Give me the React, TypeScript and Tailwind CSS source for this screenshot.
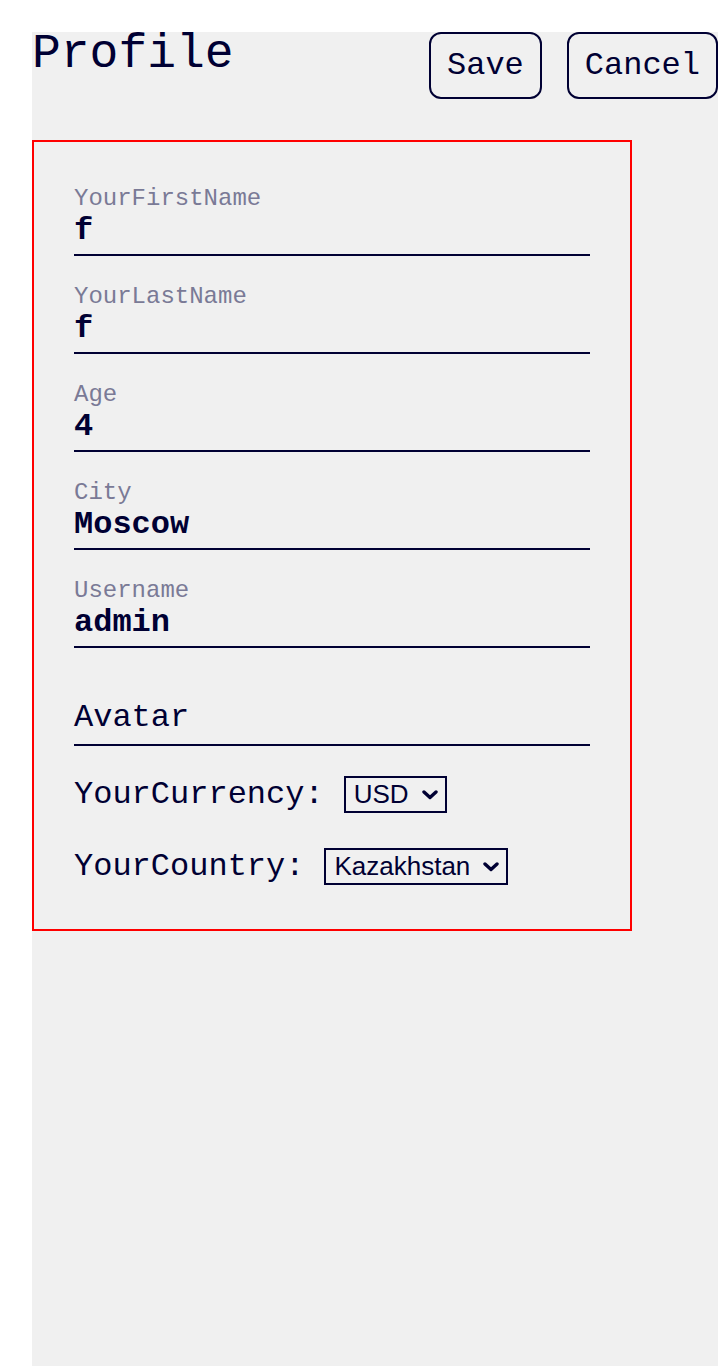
import { useState } from 'react';

const fields = [
  { label: 'YourFirstName', value: 'f' },
  { label: 'YourLastName', value: 'f' },
  { label: 'Age', value: '4' },
  { label: 'City', value: 'Moscow' },
  { label: 'Username', value: 'admin' },
];

function Chevron() {
  return (
    <svg
      className="pointer-events-none absolute right-[9px] top-1/2 -translate-y-1/2"
      width="16"
      height="11"
      viewBox="0 0 16 11"
      fill="none"
    >
      <path d="M2 2.5l6 5.5 6-5.5" stroke="#000033" strokeWidth="3.4" strokeLinecap="round" strokeLinejoin="round" />
    </svg>
  );
}

function Select({ value, options, onChange }: { value: string; options: string[]; onChange: (v: string) => void }) {
  return (
    <div className="relative ml-5 inline-flex">
      <select
        value={value}
        onChange={(e) => onChange(e.target.value)}
        className="appearance-none h-[37px] pl-2 pr-[36px] border-2 border-[#000033] bg-transparent text-[#000033] text-[26px] leading-[33px] font-['Liberation_Sans',Arial,sans-serif] outline-none"
      >
        {options.map((o) => (
          <option key={o}>{o}</option>
        ))}
      </select>
      <Chevron />
    </div>
  );
}

export default function App() {
  const [currency, setCurrency] = useState('USD');
  const [country, setCountry] = useState('Kazakhstan');

  return (
    <div className="bg-white min-h-screen">
      <div className="ml-8 mt-8 min-h-screen bg-[#f0f0f0] text-[#000033] font-['Liberation_Mono',monospace]">
        <div className="flex items-start justify-between">
          <h1 className="text-[48px] leading-[44px] font-normal">Profile</h1>
          <div className="flex gap-[25px]">
            <button className="h-[67px] px-4 border-2 border-[#000033] rounded-xl text-[32px] leading-[36px]">
              Save
            </button>
            <button className="h-[67px] px-4 border-2 border-[#000033] rounded-xl text-[32px] leading-[36px]">
              Cancel
            </button>
          </div>
        </div>

        <div className="mt-[41px] w-[600px] border-2 border-[#ff0000] px-10 pt-[43px] pb-[44px]">
          <div className="flex flex-col gap-[27px]">
            {fields.map((f) => (
              <div key={f.label}>
                <div className="text-[24px] leading-[27px] text-[#7a7a96]">{f.label}</div>
                <div className="text-[32px] leading-[38px] font-bold pb-1 border-b-2 border-[#000033]">
                  {f.value}
                </div>
              </div>
            ))}
            <div>
              <div className="h-[25px]" />
              <div className="text-[32px] leading-[36px] pb-2 border-b-2 border-[#000033]">Avatar</div>
            </div>
          </div>

          <div className="mt-[30px] flex items-center h-[37px]">
            <span className="text-[32px] leading-[36px]">YourCurrency:</span>
            <Select value={currency} options={['USD', 'EUR', 'RUB']} onChange={setCurrency} />
          </div>

          <div className="mt-[35px] flex items-center h-[37px]">
            <span className="text-[32px] leading-[36px]">YourCountry:</span>
            <Select value={country} options={['Kazakhstan', 'Russia', 'USA']} onChange={setCountry} />
          </div>
        </div>
      </div>
    </div>
  );
}
